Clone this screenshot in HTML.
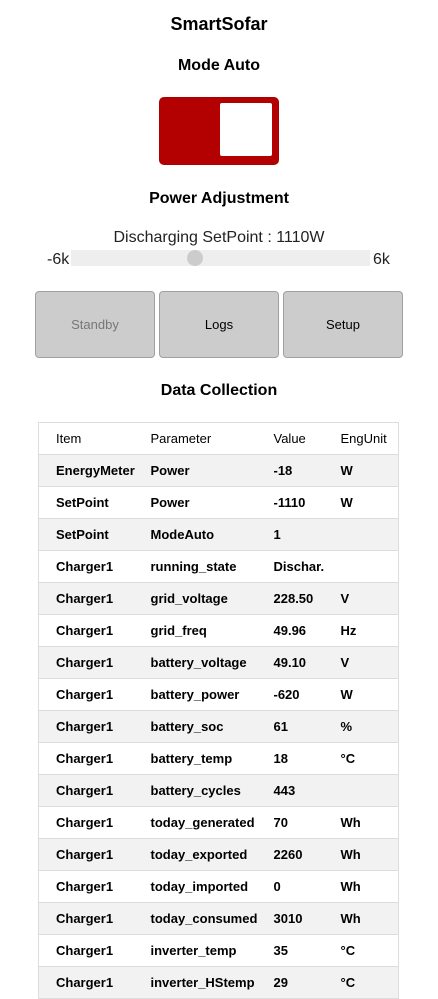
<!DOCTYPE html>
<html><head><style>
*{margin:0;padding:0;box-sizing:border-box}
body{width:438px;height:986px;overflow:hidden;background:#fff;font-family:"Liberation Sans",Arial,sans-serif;color:#000;position:relative}
.a{position:absolute}
.c{position:absolute;left:0;width:438px;text-align:center;font-weight:bold}
.btn{position:absolute;top:291px;width:120px;height:67px;background:#ccc;border:1px solid #a0a0a0;border-radius:4px;font-size:13px;text-align:center;line-height:65px}
table{position:absolute;left:38px;top:422px;width:361px;border-collapse:collapse;border:1px solid #ddd;font-size:13px}
td{height:32px;border-bottom:1px solid #ddd;padding:0;font-weight:bold}
tr:first-child td{font-weight:normal}
tr:nth-child(even) td{background:#f2f2f2}
td:nth-child(1){padding-left:17px;width:112px}
td:nth-child(2){width:123px}
td:nth-child(3){width:67px}
</style></head><body>
<div class="c" style="top:14px;font-size:18px">SmartSofar</div>
<div class="c" style="top:57px;font-size:16px">Mode Auto</div>
<div class="a" style="left:159px;top:97px;width:120px;height:68px;background:#b30000;border-radius:5px;border:1px solid #a00"></div>
<div class="a" style="left:220px;top:103px;width:52px;height:53px;background:#fff;border-radius:2px"></div>
<div class="c" style="top:190px;font-size:16px">Power Adjustment</div>
<div class="c" style="top:229px;font-size:16px;font-weight:normal;color:#222">Discharging SetPoint : 1110W</div>
<div class="a" style="left:47px;top:251px;font-size:16px;color:#222">-6k</div>
<div class="a" style="left:373px;top:251px;font-size:16px;color:#222">6k</div>
<div class="a" style="left:71px;top:250px;width:299px;height:16px;background:#eee"></div>
<div class="a" style="left:187px;top:250px;width:16px;height:16px;border-radius:50%;background:#ccc"></div>
<div class="btn" style="left:35px;color:#777">Standby</div>
<div class="btn" style="left:159px">Logs</div>
<div class="btn" style="left:283px">Setup</div>
<div class="c" style="top:382px;font-size:16px">Data Collection</div>
<table>
<tr><td>Item</td><td>Parameter</td><td>Value</td><td>EngUnit</td></tr>
<tr><td>EnergyMeter</td><td>Power</td><td>-18</td><td>W</td></tr>
<tr><td>SetPoint</td><td>Power</td><td>-1110</td><td>W</td></tr>
<tr><td>SetPoint</td><td>ModeAuto</td><td>1</td><td></td></tr>
<tr><td>Charger1</td><td>running_state</td><td>Dischar.</td><td></td></tr>
<tr><td>Charger1</td><td>grid_voltage</td><td>228.50</td><td>V</td></tr>
<tr><td>Charger1</td><td>grid_freq</td><td>49.96</td><td>Hz</td></tr>
<tr><td>Charger1</td><td>battery_voltage</td><td>49.10</td><td>V</td></tr>
<tr><td>Charger1</td><td>battery_power</td><td>-620</td><td>W</td></tr>
<tr><td>Charger1</td><td>battery_soc</td><td>61</td><td>%</td></tr>
<tr><td>Charger1</td><td>battery_temp</td><td>18</td><td>°C</td></tr>
<tr><td>Charger1</td><td>battery_cycles</td><td>443</td><td></td></tr>
<tr><td>Charger1</td><td>today_generated</td><td>70</td><td>Wh</td></tr>
<tr><td>Charger1</td><td>today_exported</td><td>2260</td><td>Wh</td></tr>
<tr><td>Charger1</td><td>today_imported</td><td>0</td><td>Wh</td></tr>
<tr><td>Charger1</td><td>today_consumed</td><td>3010</td><td>Wh</td></tr>
<tr><td>Charger1</td><td>inverter_temp</td><td>35</td><td>°C</td></tr>
<tr><td>Charger1</td><td>inverter_HStemp</td><td>29</td><td>°C</td></tr>
</table>
</body></html>
